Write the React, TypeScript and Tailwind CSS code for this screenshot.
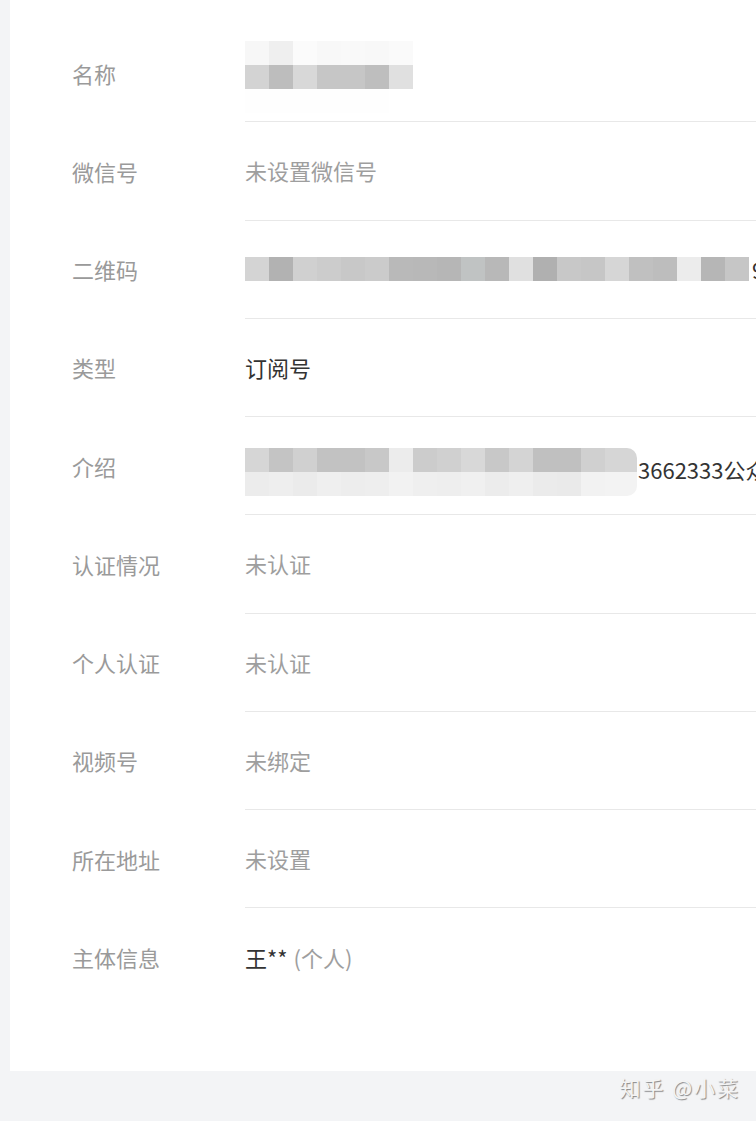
import type { ReactNode } from 'react'

const NAME_ROWS = [
  ['#f7f7f7', '#efefef', '#fbfbfb', '#f8f8f8', '#f9f9f9', '#f8f8f8', '#fafafa'],
  ['#d3d3d3', '#bdbdbd', '#d8d8d8', '#c6c6c6', '#c6c6c6', '#bebebe', '#e0e0e0'],
  ['#fefefe', '#fefefe', '#fefefe', '#fefefe', '#fefefe', '#fefefe', '#ffffff'],
]

const QR_ROW = [
  '#d4d4d4', '#b2b2b2', '#d0d0d0', '#cccccc', '#c8c8c8', '#cbcbcb', '#b9b9b9',
  '#b8b8b8', '#b6b6b6', '#c0c3c3', '#b8b8b8', '#e0e0e0', '#b0b0b0', '#c8c8c8',
  '#c6c6c6', '#d6d6d6', '#c0c0c0', '#bdbdbd', '#ececec', '#b6b6b6', '#c6c6c6',
]

const INTRO_ROWS = [
  ['#d6d6d6', '#c4c4c4', '#d0d0d0', '#c2c2c2', '#c2c2c2', '#c8c8c8', '#ececec', '#cccccc',
    '#d0d0d0', '#d8d8d8', '#c8c8c8', '#d4d4d4', '#c0c0c0', '#c0c0c0', '#d0d0d0', '#d6d6d6'],
  ['#ececec', '#eeeeee', '#ebebeb', '#efefef', '#ededed', '#eeeeee', '#f2f2f2', '#efefef',
    '#eeeeee', '#f0f0f0', '#ececec', '#efefef', '#ebebeb', '#eaeaea', '#f2f2f2', '#f3f3f3'],
]

function Mosaic({ rows, roundRight }: { rows: string[][]; roundRight?: boolean }) {
  return (
    <div className={`flex shrink-0 flex-col overflow-hidden ${roundRight ? 'rounded-r-[10px]' : ''}`}>
      {rows.map((row, r) => (
        <div key={r} className="flex">
          {row.map((c, i) => (
            <div
              key={i}
              className={`h-[24px] shrink-0 ${roundRight && i === row.length - 1 ? 'w-[32px]' : 'w-[24px]'}`}
              style={{ backgroundColor: c }}
            />
          ))}
        </div>
      ))}
    </div>
  )
}

function Row({ label, children, last, top }: { label: string; children: ReactNode; last?: boolean; top?: boolean }) {
  return (
    <div className="flex h-[98.25px]">
      <div className="flex w-[173px] shrink-0 items-center text-[22px] text-[#9a9a9a]">{label}</div>
      <div
        className={`flex min-w-0 flex-1 overflow-hidden whitespace-nowrap text-[22px] ${
          top ? 'items-start pt-[31px]' : 'items-center'
        } ${last ? '' : 'border-b border-[#e8e8e8]'}`}
      >
        {children}
      </div>
    </div>
  )
}

export default function App() {
  return (
    <div
      className="min-h-[1121px] w-full overflow-hidden bg-[#f3f4f6] pl-[10px]"
      style={{ fontFamily: '"Noto Sans CJK SC", "Noto Sans", sans-serif' }}
    >
      <div className="bg-white pb-[64px] pl-[62px] pt-[24px]">
        <Row label="名称">
          <div className="mt-[8px]">
            <Mosaic rows={NAME_ROWS} />
          </div>
        </Row>
        <Row label="微信号">
          <span className="text-[#9e9e9e]">未设置微信号</span>
        </Row>
        <Row label="二维码">
          <Mosaic rows={[QR_ROW]} />
          <span className="ml-[3px] text-[#333]">9</span>
        </Row>
        <Row label="类型">
          <span className="text-[#333]">订阅号</span>
        </Row>
        <Row label="介绍" top>
          <Mosaic rows={INTRO_ROWS} roundRight />
          <span className="mt-[9px] ml-[1px] leading-[24px] text-[#333]">3662333公众号</span>
        </Row>
        <Row label="认证情况">
          <span className="text-[#9e9e9e]">未认证</span>
        </Row>
        <Row label="个人认证">
          <span className="text-[#9e9e9e]">未认证</span>
        </Row>
        <Row label="视频号">
          <span className="text-[#9e9e9e]">未绑定</span>
        </Row>
        <Row label="所在地址">
          <span className="text-[#9e9e9e]">未设置</span>
        </Row>
        <Row label="主体信息" last>
          <span className="text-[#333]">王**</span>
          <span className="ml-[6px] text-[#9e9e9e]">(个人)</span>
        </Row>
      </div>
      <div className="flex h-[50px] items-start justify-end pr-[16px] pt-[2px]">
        <span className="text-[21px] leading-[28px] tracking-[2px] text-[#f4f4f4] [text-shadow:1px_1px_1px_rgba(0,0,0,0.45)]">
          知乎 @小菜
        </span>
      </div>
    </div>
  )
}
